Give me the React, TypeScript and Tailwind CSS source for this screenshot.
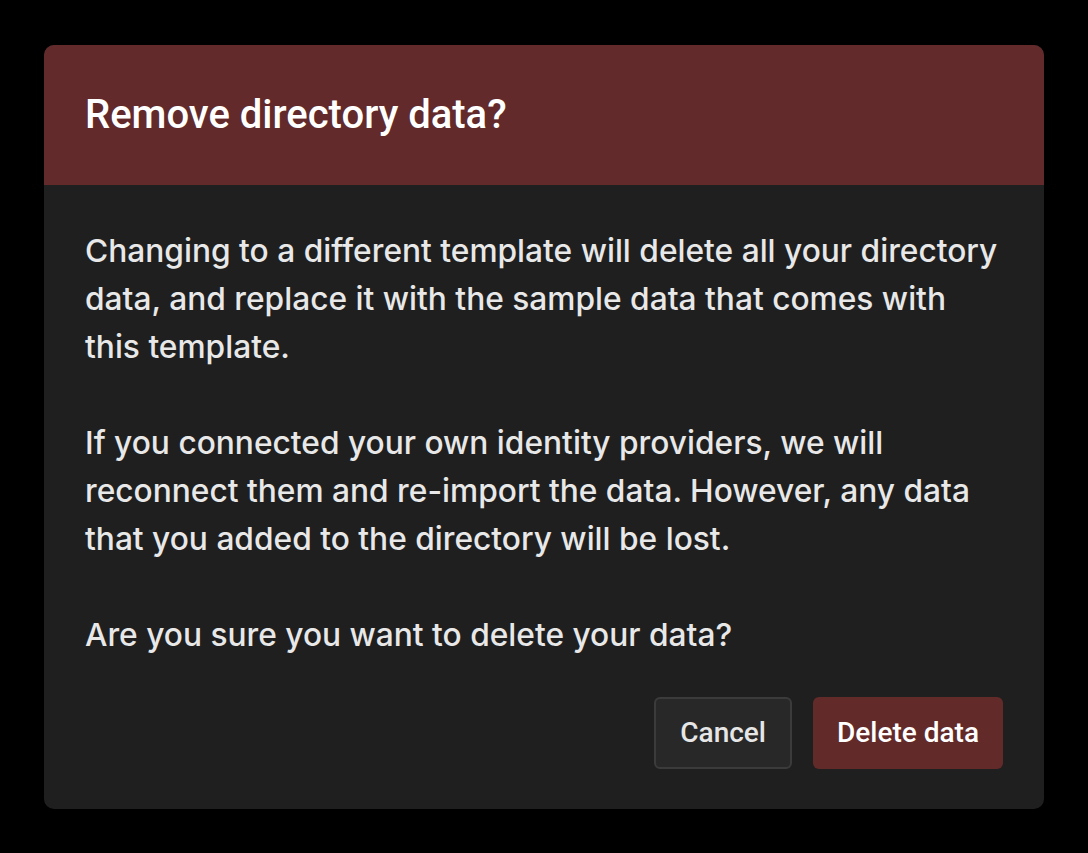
import React from 'react';

export default function App() {
  return (
    <div className="min-h-screen w-full bg-black flex items-start justify-center pt-[45px]">
      <div className="w-[1000px] rounded-[10px] overflow-hidden bg-[#1f1f1f]">
        {/* Header */}
        <div className="h-[140px] bg-[#622a2a] flex items-center px-[41px]">
          <h2 className="text-[40px] font-medium text-white" style={{ fontFamily: 'Roboto, sans-serif' }}>
            Remove directory data?
          </h2>
        </div>

        {/* Body */}
        <div className="px-[41px] pt-[42px] pb-[40px]">
          <div
            className="text-[31.7px] leading-[48px] font-medium text-[#e8e8e8] space-y-[48px]"
            style={{ fontFamily: 'Inter, sans-serif' }}
          >
            <p>
              Changing to a different template will delete all your directory data, and replace it with the sample data
              that comes with this template.
            </p>
            <p>
              If you connected your own identity providers, we will reconnect them and re-import the data. However, any
              data that you added to the directory will be lost.
            </p>
            <p>Are you sure you want to delete your data?</p>
          </div>

          <div className="flex justify-end gap-[21px] mt-[38px]" style={{ fontFamily: 'Roboto, sans-serif' }}>
            <button className="h-[72px] px-[24px] rounded-[6px] border-2 border-[#3b3b3b] bg-[#282828] text-[28px] font-medium text-[#e6e6e6]">
              Cancel
            </button>
            <button className="h-[72px] px-[24px] rounded-[6px] bg-[#632a2a] text-[28px] font-medium text-white">
              Delete data
            </button>
          </div>
        </div>
      </div>
    </div>
  );
}
